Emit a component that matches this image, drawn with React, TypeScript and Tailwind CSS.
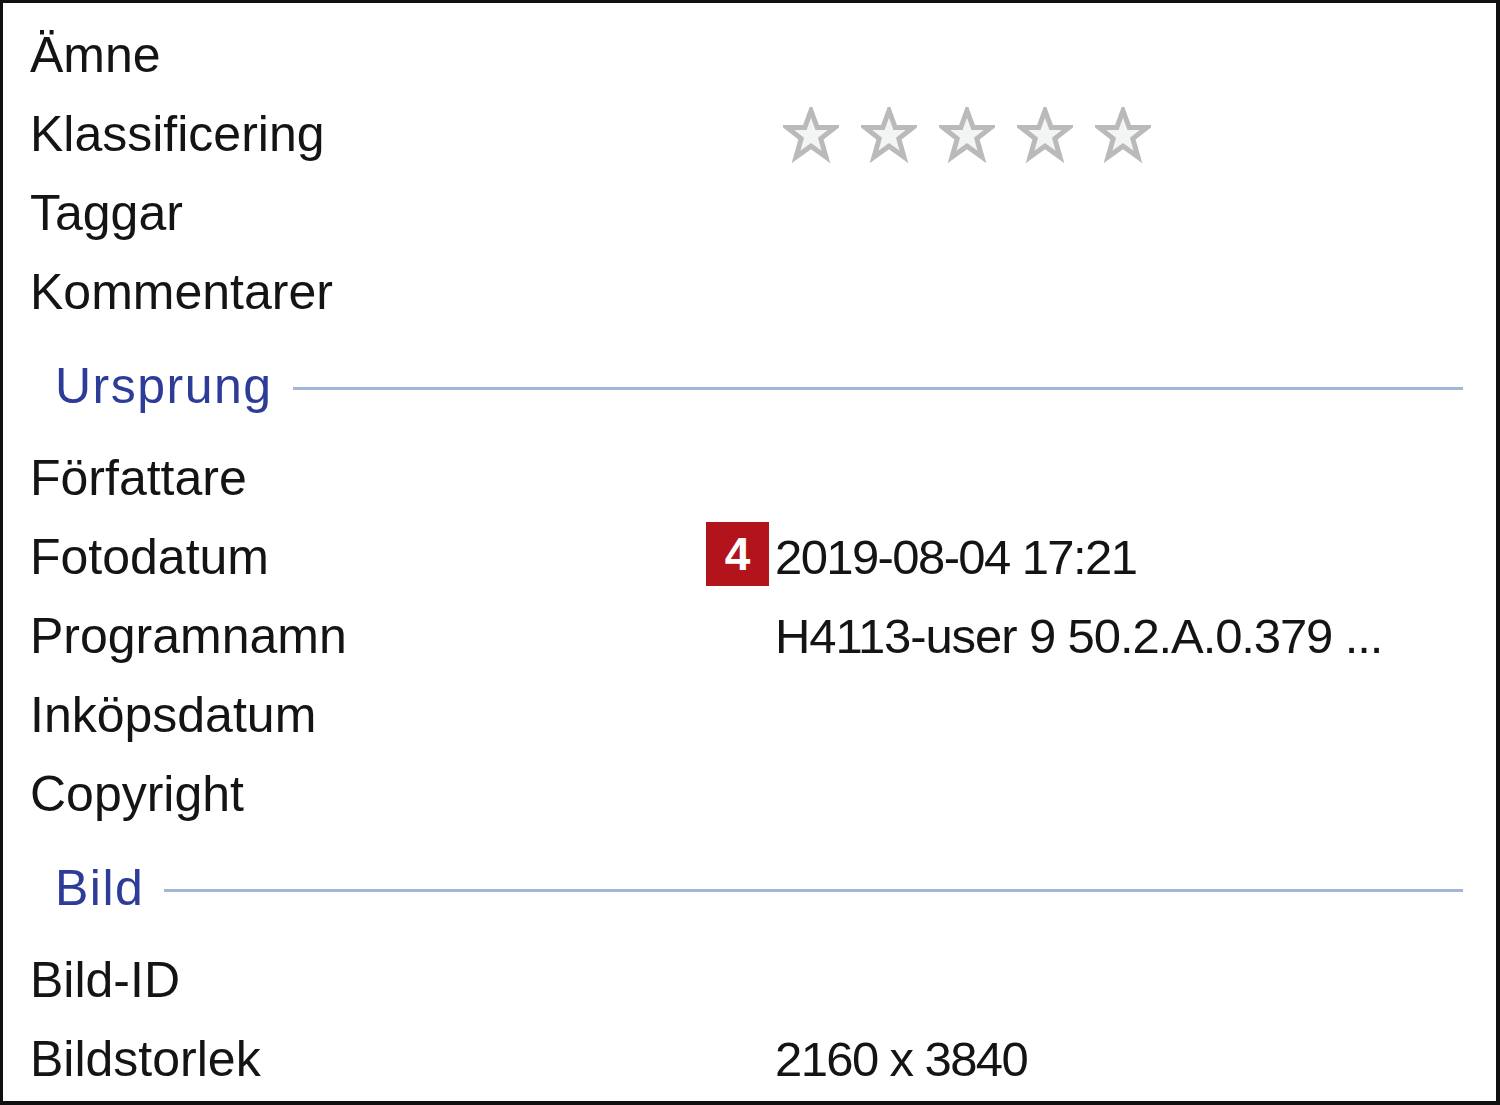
import type { ReactNode } from "react";

const font = { fontFamily: '"Liberation Sans", Arial, sans-serif' };

function Star() {
  return (
    <svg width="56" height="56" viewBox="0 0 56 56" className="shrink-0">
      <polygon
        points="28,3.5 34.2,20.5 52,20.5 37.8,31.6 43,50 28,39.2 13,50 18.2,31.6 4,20.5 21.8,20.5"
        fill="#f3f5f5"
        stroke="#bababa"
        strokeWidth="5"
        strokeLinejoin="miter"
      />
    </svg>
  );
}

function Row({ label, children }: { label: string; children?: ReactNode }) {
  return (
    <div className="flex h-[79px] items-center">
      <div className="w-[745px] shrink-0 text-[50px] leading-[79px] text-[#141414]">{label}</div>
      <div className="relative flex flex-1 items-center">{children}</div>
    </div>
  );
}

function Value({ text, tight }: { text: string; tight?: boolean }) {
  return (
    <span
      className={
        tight
          ? "whitespace-nowrap text-[49px] leading-[79px] tracking-[-1.6px] text-[#141414]"
          : "whitespace-nowrap text-[49px] leading-[79px] tracking-[-1.1px] text-[#141414]"
      }
    >
      {text}
    </span>
  );
}

function Section({ title }: { title: string }) {
  return (
    <div className="flex h-[107px] items-center pl-[25px] pr-[33px]">
      <span className="text-[50px] leading-none tracking-[1.5px] text-[#2d3c98]">{title}</span>
      <div className="ml-[20px] mt-[6px] h-[3px] flex-1 bg-[#a3b6d8]" />
    </div>
  );
}

export default function App() {
  return (
    <div
      className="h-[1105px] w-[1500px] border-t-[3px] border-l-[3px] border-r-[4px] border-b-[4px] border-[#101010] bg-white pt-[13px] pl-[27px]"
      style={font}
    >
      <Row label="Ämne" />
      <Row label="Klassificering">
        <div className="ml-[8px] flex gap-[22px]">
          <Star />
          <Star />
          <Star />
          <Star />
          <Star />
        </div>
      </Row>
      <Row label="Taggar" />
      <Row label="Kommentarer" />
      <Section title="Ursprung" />
      <Row label="Författare" />
      <Row label="Fotodatum">
        <span className="absolute left-[-69px] top-[calc(50%-36px)] flex h-[64px] w-[63px] items-center justify-center bg-[#b3141c] text-[46px] font-bold leading-none text-white">
          4
        </span>
        <Value text="2019-08-04 17:21" tight />
      </Row>
      <Row label="Programnamn">
        <Value text="H4113-user 9 50.2.A.0.379 ..." />
      </Row>
      <Row label="Inköpsdatum" />
      <Row label="Copyright" />
      <Section title="Bild" />
      <Row label="Bild-ID" />
      <Row label="Bildstorlek">
        <Value text="2160 x 3840" tight />
      </Row>
    </div>
  );
}
